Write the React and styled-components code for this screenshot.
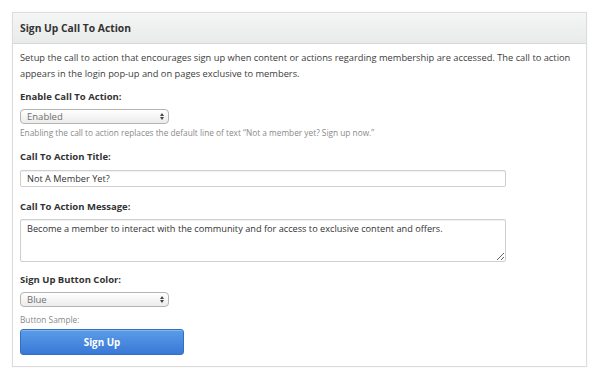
import React from 'react';
import styled, { createGlobalStyle } from 'styled-components';

const GlobalStyle = createGlobalStyle`
    html, body {
        margin: 0;
        padding: 0;
        background: #fff;
        font-family: "Open Sans", "Liberation Sans", sans-serif;
        color: #333;
    }
`;

const Page = styled.div`
    padding: 12px 13px 12px 12px;
`;

const Panel = styled.div`
    width: 575px;
    border: 1px solid #dcdcdc;
    box-shadow: 0 0 2px rgba(0, 0, 0, 0.06);
    box-sizing: border-box;
`;

const Header = styled.div`
    height: 30px;
    display: flex;
    align-items: center;
    padding: 0 7px;
    background: linear-gradient(#f4f5f5, #e9ebeb);
    border-bottom: 1px solid #d6d6d6;
    font-size: 10.3px;
    font-weight: 700;
    color: #333;
`;

const Body = styled.div`
    padding: 6px 7px 11px;
    display: flex;
    flex-direction: column;
    align-items: flex-start;
`;

const Intro = styled.p`
    margin: 0;
    font-size: 9.3px;
    line-height: 16px;
    color: #3c3c3c;
`;

const Label = styled.div`
    margin-top: ${p => p.$top}px;
    font-size: 9.5px;
    line-height: 16px;
    font-weight: 700;
    color: #333;
`;

const SelectWrap = styled.div`
    position: relative;
    margin-top: ${p => p.$top}px;
    width: 149px;
`;

const Select = styled.select`
    appearance: none;
    width: 100%;
    height: 15px;
    display: block;
    box-sizing: border-box;
    padding: 0 6px;
    border: 1px solid #b4b4b4;
    border-radius: 4px;
    background: linear-gradient(#ffffff, #ececec);
    font-family: inherit;
    font-size: 9.5px;
    line-height: 13px;
    color: #707070;
    outline: none;
`;

const Arrow = styled.span`
    position: absolute;
    right: 5px;
    top: 0;
    height: 15px;
    display: flex;
    flex-direction: column;
    justify-content: center;
    gap: 1px;
    pointer-events: none;

    &::before, &::after {
        content: '';
        display: block;
        border-left: 2.5px solid transparent;
        border-right: 2.5px solid transparent;
    }
    &::before {
        border-bottom: 3px solid #444;
    }
    &::after {
        border-top: 3px solid #444;
    }
`;

const Help = styled.div`
    margin-top: ${p => p.$top}px;
    font-size: 8.3px;
    line-height: 12px;
    color: #8a8a8a;
`;

const TextInput = styled.input`
    margin-top: 5px;
    width: 486px;
    height: 17px;
    box-sizing: border-box;
    padding: 0 6px;
    border: 1px solid #cfcfcf;
    border-radius: 2px;
    box-shadow: inset 0 1px 1px rgba(0, 0, 0, 0.06);
    font-family: inherit;
    font-size: 9.2px;
    color: #333;
    outline: none;
`;

const TextArea = styled.textarea`
    margin-top: 4px;
    width: 486px;
    height: 43px;
    box-sizing: border-box;
    padding: 2px 6px;
    border: 1px solid #cfcfcf;
    border-radius: 2px;
    box-shadow: inset 0 1px 1px rgba(0, 0, 0, 0.06);
    font-family: inherit;
    font-size: 9.2px;
    line-height: 14px;
    color: #333;
    outline: none;
    resize: vertical;
`;

const SampleButton = styled.button`
    margin-top: 3px;
    width: 164px;
    height: 26px;
    border: 1px solid #2f6fc7;
    border-radius: 3px;
    background: linear-gradient(#5b9ce8, #3a78d6);
    box-shadow: inset 0 1px 0 rgba(255, 255, 255, 0.25);
    font-family: inherit;
    font-size: 9.8px;
    font-weight: 700;
    color: #fff;
    cursor: pointer;
`;

function Dropdown({ top, value, options }) {
    return (
        <SelectWrap $top={top}>
            <Select defaultValue={value}>
                {options.map(o => <option key={o}>{o}</option>)}
            </Select>
            <Arrow />
        </SelectWrap>
    );
}

export default function App() {
    return (
        <Page>
            <GlobalStyle />
            <Panel>
                <Header>Sign Up Call To Action</Header>
                <Body>
                    <Intro>
                        Setup the call to action that encourages sign up when content or actions regarding membership are accessed. The call to action appears in the login pop-up and on pages exclusive to members.
                    </Intro>
                    <Label $top={7}>Enable Call To Action:</Label>
                    <Dropdown top={4} value="Enabled" options={['Enabled', 'Disabled']} />
                    <Help $top={3}>Enabling the call to action replaces the default line of text “Not a member yet? Sign up now.”</Help>
                    <Label $top={10}>Call To Action Title:</Label>
                    <TextInput defaultValue="Not A Member Yet?" />
                    <Label $top={12}>Call To Action Message:</Label>
                    <TextArea defaultValue="Become a member to interact with the community and for access to exclusive content and offers." />
                    <Label $top={10}>Sign Up Button Color:</Label>
                    <Dropdown top={4} value="Blue" options={['Blue', 'Green', 'Red', 'Orange']} />
                    <Help $top={7}>Button Sample:</Help>
                    <SampleButton>Sign Up</SampleButton>
                </Body>
            </Panel>
        </Page>
    );
}
